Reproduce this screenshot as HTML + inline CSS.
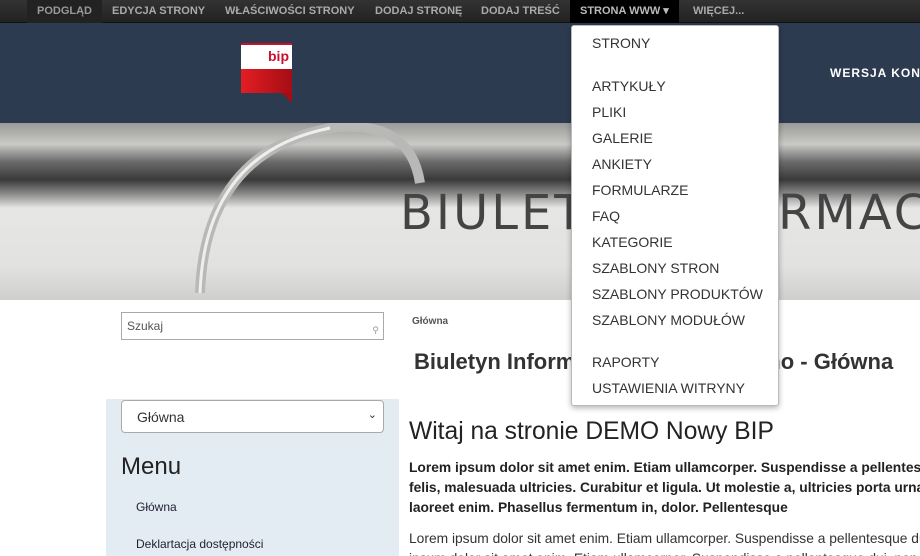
<!DOCTYPE html>
<html><head><meta charset="utf-8"><style>
*{margin:0;padding:0;box-sizing:border-box}
html,body{overflow:hidden}
body{width:920px;height:556px;overflow:hidden;background:#fff;font-family:"Liberation Sans",Arial,sans-serif;position:relative}
.tb{position:absolute;left:0;top:0;width:920px;height:23px;background:linear-gradient(#333,#222);border-bottom:1px solid #111}
.tb span{position:absolute;top:0;height:23px;line-height:23px;font-size:11px;font-weight:bold;color:#aaa;padding:0 10px;white-space:nowrap}
.hd{position:absolute;left:0;top:23px;width:920px;height:100px;background:#2c3b50;overflow:hidden}
.ban{position:absolute;left:0;top:123px;width:920px;height:177px;overflow:hidden;
background:linear-gradient(180deg,#9a9a98 0%,#c9c9c6 12%,#6a6a6a 22%,#3a3a3a 32%,#8a8a8a 40%,#e6e6e4 48%,#e2e2e0 80%,#cfcfcd 100%)}
.main{position:absolute;left:0;top:300px;width:920px;height:256px;overflow:hidden}
.dd{position:absolute;left:571px;top:25px;width:208px;height:381px;background:#fff;border:1px solid #bbb;border-radius:3px;box-shadow:0 2px 6px rgba(0,0,0,.3)}
.dd div{position:absolute;left:20px;font-size:14px;color:#333;line-height:16px;white-space:nowrap}
</style></head><body>
<div class="tb">
<span style="left:27px;background:#222;color:#999">PODGLĄD</span>
<span style="left:102px">EDYCJA STRONY</span>
<span style="left:215px">WŁAŚCIWOŚCI STRONY</span>
<span style="left:365px">DODAJ STRONĘ</span>
<span style="left:471px">DODAJ TREŚĆ</span>
<span style="left:570px;background:#000;color:#bbb">STRONA WWW &#9662;</span>
<span style="left:683px">WIĘCEJ...</span>
</div>
<div class="hd">
<div style="position:absolute;left:241px;top:20px;width:51px;height:26px;background:#fff;border-top:2px solid #c8102e"><span style="position:absolute;right:3px;top:3px;font-size:14px;font-weight:bold;color:#c8102e">bip</span></div>
<div style="position:absolute;left:241px;top:46px;width:51px;height:24px;background:linear-gradient(90deg,#e31e24,#a50d14)"></div>
<div style="position:absolute;left:282px;top:70px;width:0;height:0;border-left:10px solid transparent;border-top:10px solid #a50d14"></div>
<div style="position:absolute;left:830px;top:43px;font-size:12px;font-weight:bold;color:#fff;letter-spacing:1px;white-space:nowrap">WERSJA KONTRASTOWA</div>
</div>
<div class="ban">
<svg width="920" height="177" style="position:absolute;left:0;top:0">
<path d="M200 170 Q205 30 330 5 Q410 -5 420 60" fill="none" stroke="#b8b8b6" stroke-width="10"/>
<path d="M200 170 Q205 30 330 5" fill="none" stroke="#eee" stroke-width="3"/>
</svg>
<div style="position:absolute;left:400px;top:62px;font-size:48px;color:#444;letter-spacing:3px;font-family:'DejaVu Sans',sans-serif">BIULET</div>
<div style="position:absolute;left:778px;top:62px;font-size:48px;color:#444;letter-spacing:3px;font-family:'DejaVu Sans',sans-serif;white-space:nowrap">RMACJI</div>
</div>
<div class="main">
<div style="position:absolute;left:121px;top:12px;width:263px;height:28px;border:1px solid #aaa;font-size:12px;color:#555;padding:6px 5px">Szukaj<span style="position:absolute;right:4px;top:12px;font-size:9px;color:#999">&#9906;</span></div>
<div style="position:absolute;left:412px;top:16px;font-size:10px;font-weight:bold;color:#555">Główna</div>
<div style="position:absolute;left:414px;top:49px;font-size:22px;font-weight:bold;color:#333;white-space:nowrap">Biuletyn Informacji Publicznej Demo - Główna</div>
<div style="position:absolute;left:106px;top:99px;width:293px;height:157px;background:#e3ebf3"></div>
<div style="position:absolute;left:121px;top:100px;width:263px;height:33px;background:#fff;border:1px solid #aaa;border-radius:4px;font-size:14px;color:#333;padding:8px 15px">Główna<span style="position:absolute;right:6px;top:7px;font-size:11px">&#8964;</span></div>
<div style="position:absolute;left:121px;top:153px;font-size:24px;color:#222">Menu</div>
<div style="position:absolute;left:136px;top:200px;font-size:12px;color:#223">Główna</div>
<div style="position:absolute;left:136px;top:237px;font-size:12px;color:#223">Deklartacja dostępności</div>
<div style="position:absolute;left:409px;top:118px;font-size:24.6px;color:#222;white-space:nowrap">Witaj na stronie DEMO Nowy BIP</div>
<div style="position:absolute;left:409px;top:158px;font-size:13.8px;font-weight:bold;color:#222;line-height:20px;white-space:nowrap">Lorem ipsum dolor sit amet enim. Etiam ullamcorper. Suspendisse a pellentesque<br>felis, malesuada ultricies. Curabitur et ligula. Ut molestie a, ultricies porta urna<br>laoreet enim. Phasellus fermentum in, dolor. Pellentesque</div>
<div style="position:absolute;left:409px;top:229px;font-size:13.8px;color:#333;line-height:20px;white-space:nowrap">Lorem ipsum dolor sit amet enim. Etiam ullamcorper. Suspendisse a pellentesque dui<br>ipsum dolor sit amet enim. Etiam ullamcorper. Suspendisse a pellentesque dui, non</div>
</div>
<div class="dd">
<div style="top:9px">STRONY</div>
<div style="top:52px">ARTYKUŁY</div>
<div style="top:78px">PLIKI</div>
<div style="top:104px">GALERIE</div>
<div style="top:130px">ANKIETY</div>
<div style="top:156px">FORMULARZE</div>
<div style="top:182px">FAQ</div>
<div style="top:208px">KATEGORIE</div>
<div style="top:234px">SZABLONY STRON</div>
<div style="top:260px">SZABLONY PRODUKTÓW</div>
<div style="top:286px">SZABLONY MODUŁÓW</div>
<div style="top:328px">RAPORTY</div>
<div style="top:354px">USTAWIENIA WITRYNY</div>
</div>
</body></html>
